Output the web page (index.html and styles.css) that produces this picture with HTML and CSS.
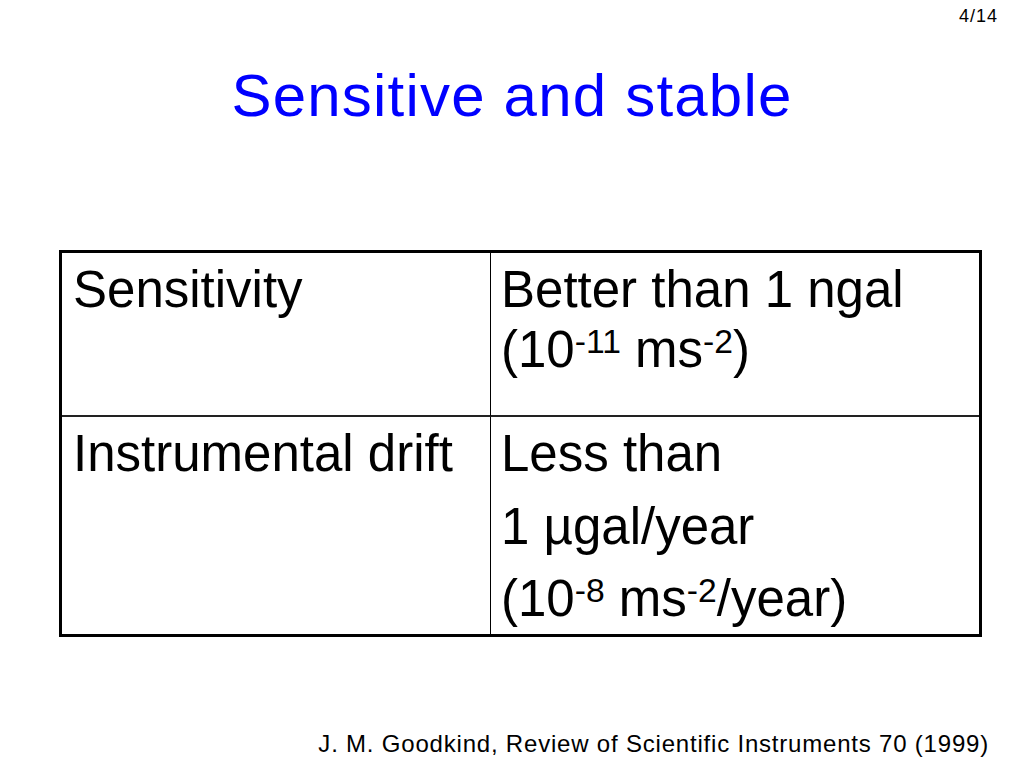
FILE: index.html
```html
<!DOCTYPE html>
<html lang="en">
<head>
<meta charset="utf-8">
<title>Sensitive and stable</title>
<link rel="stylesheet" href="styles.css">
</head>
<body>
<div class="slide">
  <div class="page-num">4/14</div>
  <h1 class="title">Sensitive and stable</h1>
  <div class="table">
    <div class="cell c-left r-top">Sensitivity</div>
    <div class="cell c-right r-top">Better than 1 ngal<br>(10<sup>-11</sup> ms<sup>-2</sup>)</div>
    <div class="cell c-left">Instrumental drift</div>
    <div class="cell c-right">
      <p>Less than</p>
      <p>1 µgal/year</p>
      <p>(10<sup>-8</sup> ms<sup>-2</sup>/year)</p>
    </div>
  </div>
  <div class="footer">J. M. Goodkind, Review of Scientific Instruments 70 (1999)</div>
</div>
</body>
</html>
```
FILE: styles.css
```css
html, body {
  margin: 0;
  padding: 0;
  background: #fff;
}
.slide {
  width: 1024px;
  height: 768px;
  overflow: hidden;
  font-family: "Liberation Sans", Arial, sans-serif;
  color: #000;
}
.page-num {
  padding: 6px 26px 0 0;
  text-align: right;
  font-size: 18px;
  line-height: 20px;
  letter-spacing: 1px;
}
.title {
  margin: 34px 0 0;
  text-align: center;
  font-weight: normal;
  font-size: 60px;
  line-height: 72px;
  letter-spacing: 1.2px;
  color: #0000ff;
}
.table {
  margin: 118px 0 0 59px;
  width: 923px;
  box-sizing: border-box;
  border: 3px solid #000;
  display: grid;
  grid-template-columns: 429px 1fr;
  grid-template-rows: 164px 217px;
  font-size: 51px;
  line-height: 60px;
}
.cell {
  box-sizing: border-box;
  padding: 7px 10px 0 11px;
}
.c-right {
  padding-left: 10px;
}
.c-left {
  border-right: 1px solid #000;
}
.r-top {
  border-bottom: 2px solid #222;
}
.cell p {
  margin: 0 0 12.5px;
}
sup {
  font-size: 0.66em;
  line-height: 0;
  vertical-align: 14px;
}
.footer {
  margin-top: 94px;
  padding-right: 35px;
  text-align: right;
  font-size: 24px;
  line-height: 26px;
  letter-spacing: 0.8px;
}
```
